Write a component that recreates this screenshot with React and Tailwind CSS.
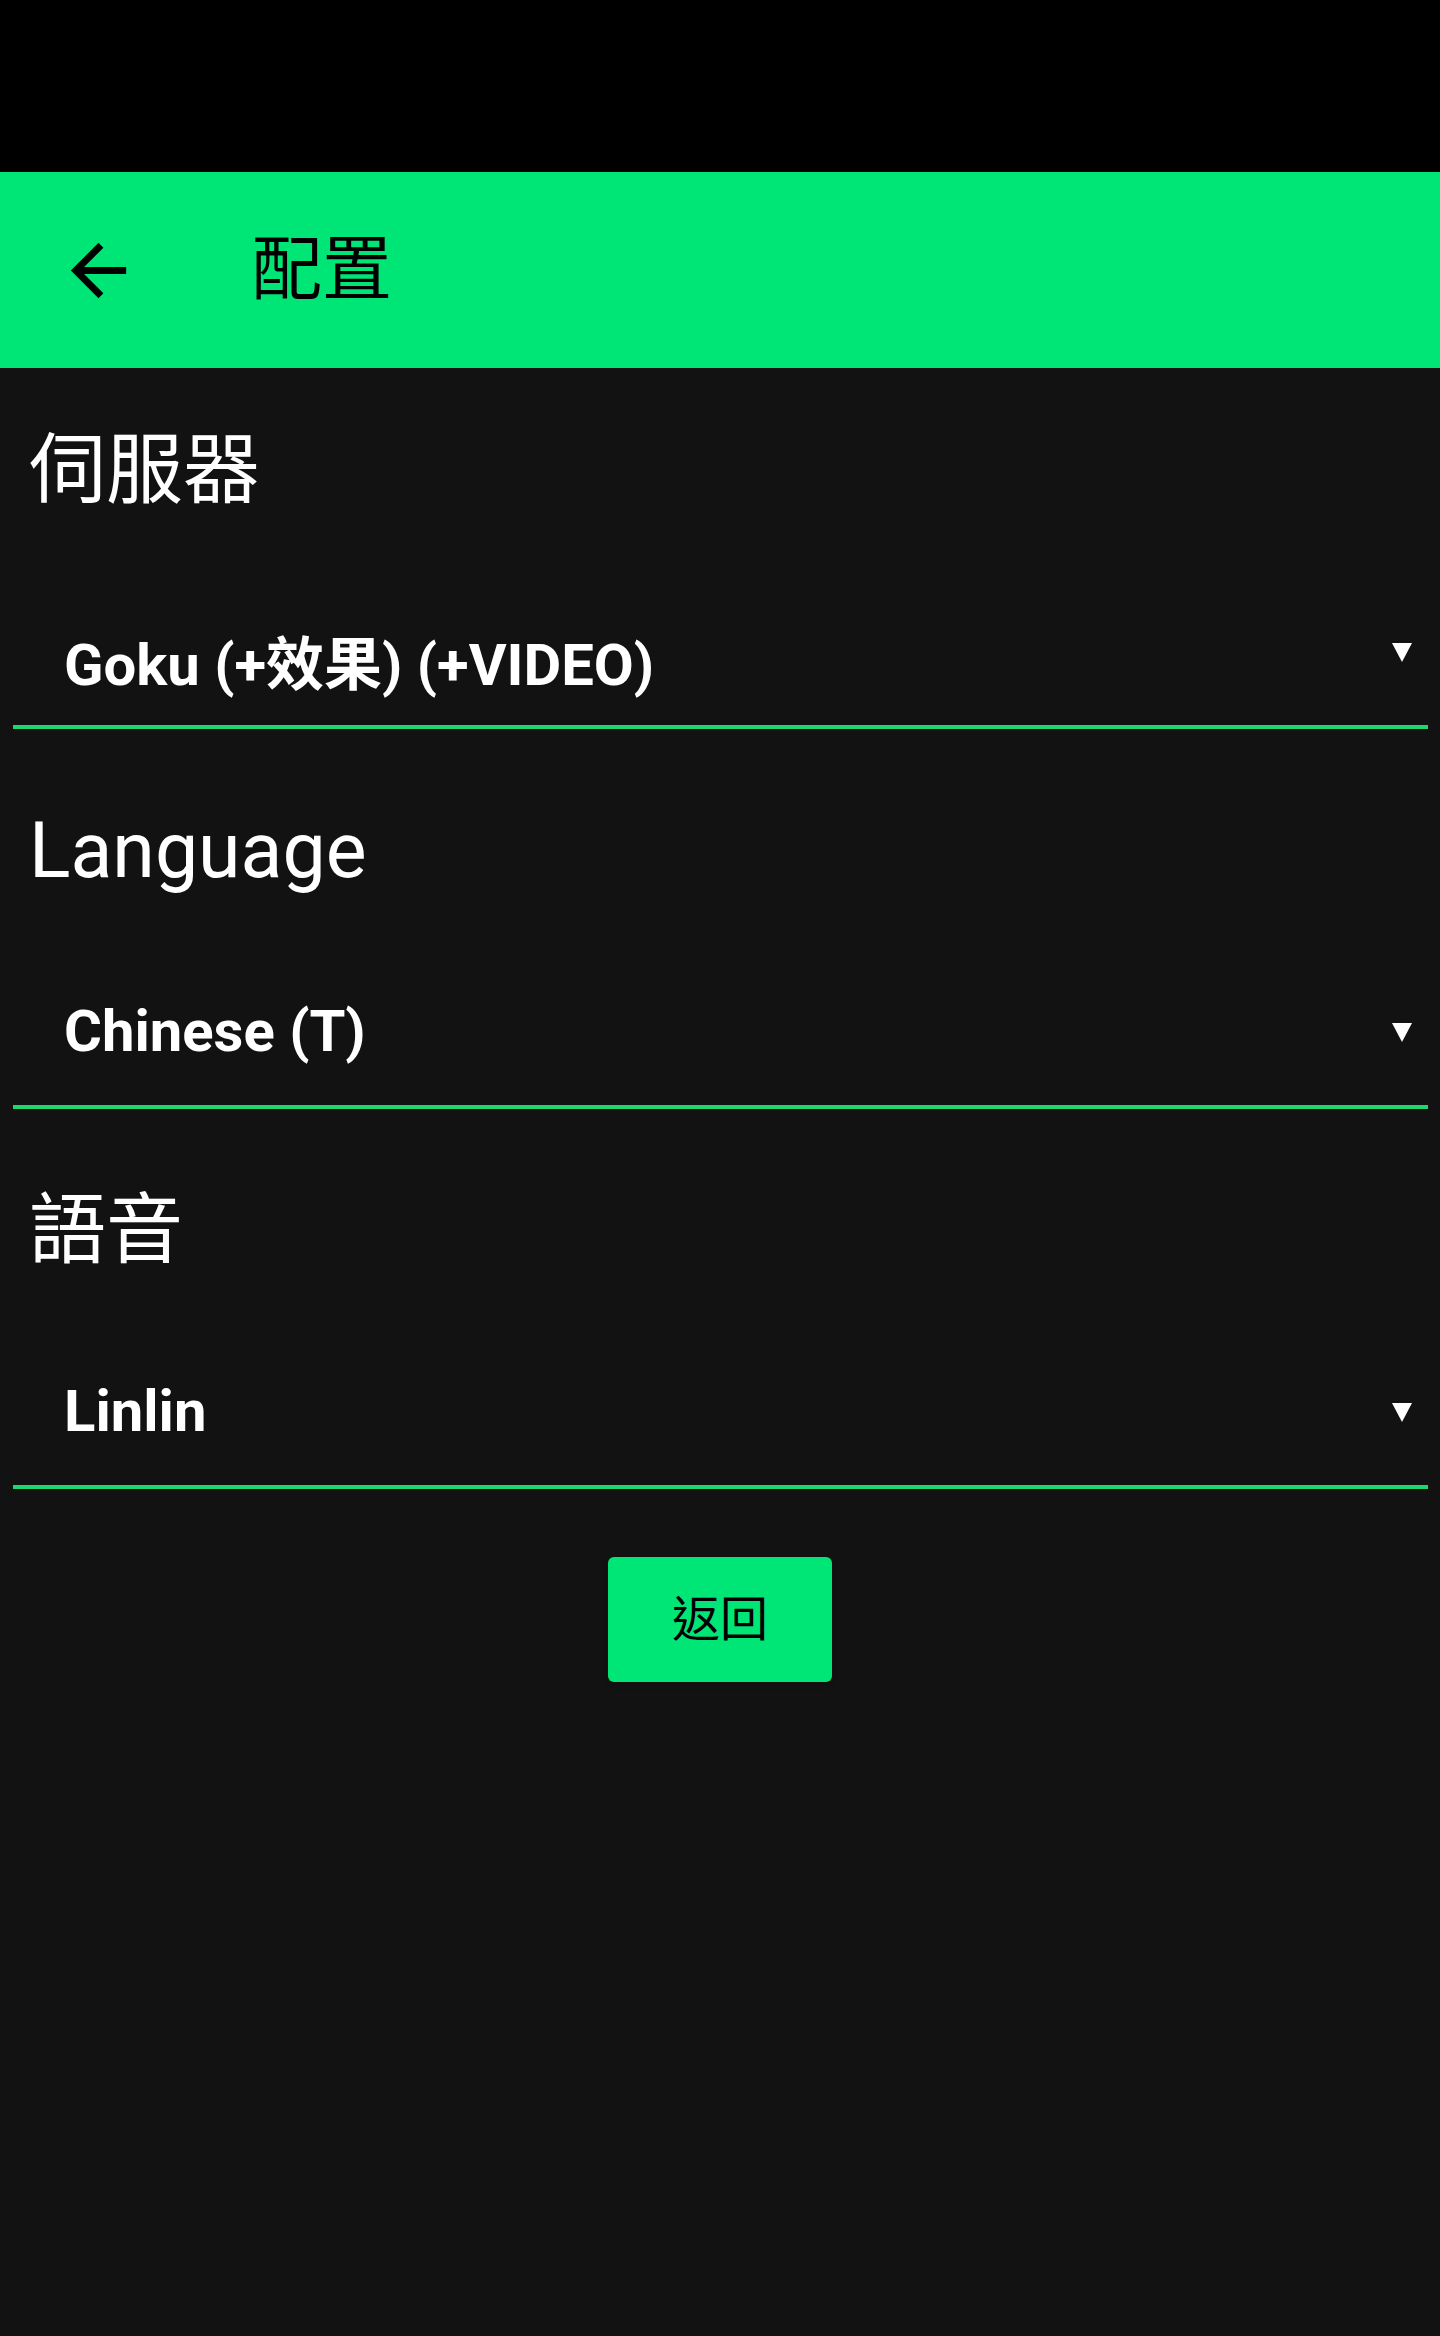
const fontStack = "font-['Roboto','Noto_Sans_CJK_TC',sans-serif]";

const Section = ({ title, value, first }) => (
  <div>
    <div className="pl-[29px] pt-[1px] text-[77px] leading-[80px] text-white font-normal">{title}</div>
    <div
      className={`mt-[111px] ml-[13px] mr-[12px] flex items-end justify-between border-b-4 border-[#1ed770] pl-[51px] pr-[16px] ${
        first ? 'pt-[14px] pb-[31px]' : 'pt-0 pb-[45px]'
      }`}
    >
      <span className="text-[58px] leading-[58px] font-bold text-white">{value}</span>
      <svg
        width="20"
        height="19"
        viewBox="0 0 20 19"
        className={first ? 'mb-[32px]' : 'mb-[18px]'}
      >
        <polygon points="0,0 20,0 10,19" fill="#ffffff" />
      </svg>
    </div>
  </div>
);

const App = () => {
  return (
    <div className={`${fontStack} min-h-[2336px] bg-[#121212] flex flex-col`}>
      <div className="h-[172px] bg-black" />

      <div className="h-[196px] bg-[#00e676] flex items-center">
        <button className="ml-[57px] focus:outline-none">
          <svg width="83" height="83" viewBox="0 0 24 24" className="block">
            <path
              d="M20 11H7.83l5.59-5.59L12 4l-8 8 8 8 1.41-1.41L7.83 13H20v-2z"
              fill="#000000"
            />
          </svg>
        </button>
        <h1 className="ml-[112px] text-[70px] leading-none font-normal text-black">配置</h1>
      </div>

      <div className="flex-1 flex flex-col pt-[62px]">
        <Section title="伺服器" value="Goku (+效果) (+VIDEO)" first />
        <div className="mt-[81px]">
          <Section title="Language" value="Chinese (T)" />
        </div>
        <div className="mt-[81px]">
          <Section title="語音" value="Linlin" />
        </div>

        <button className="mt-[68px] mx-auto w-[224px] h-[125px] rounded-[6px] bg-[#00e676] shadow-md text-[48px] leading-none text-black font-normal">
          返回
        </button>
      </div>
    </div>
  );
};

export default App;
